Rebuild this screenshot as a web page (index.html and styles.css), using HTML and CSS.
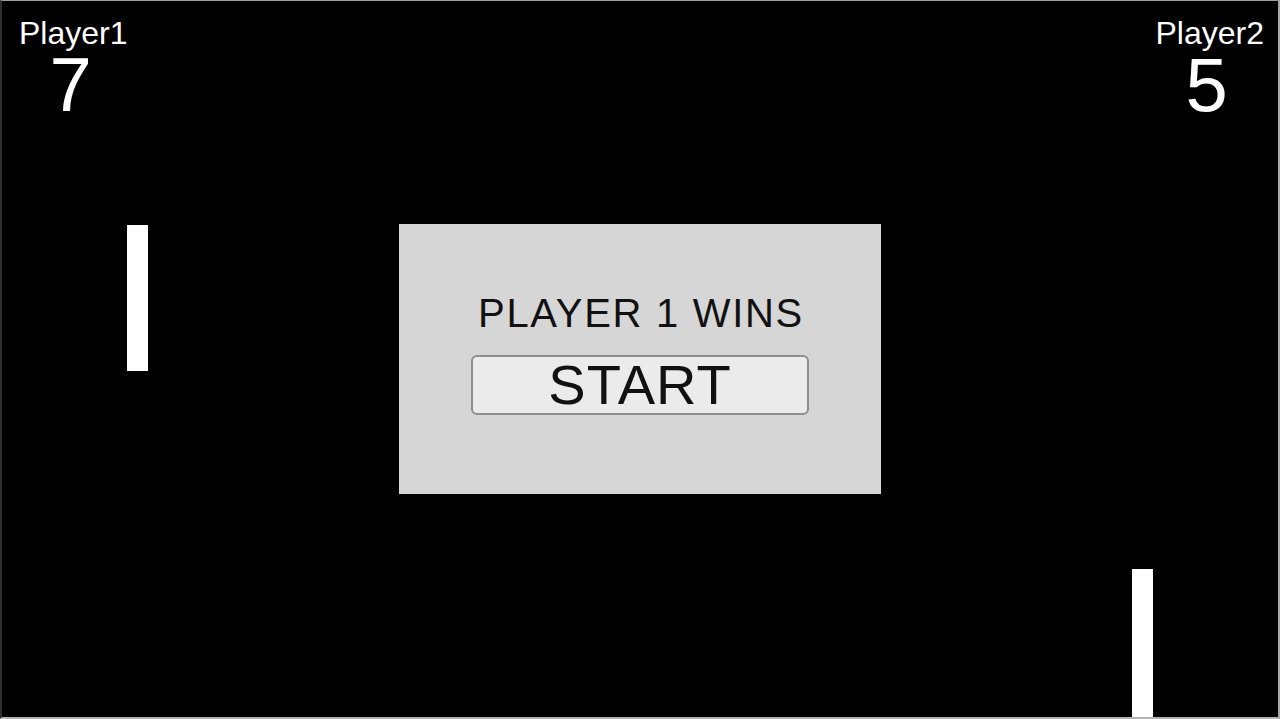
FILE: index.html
```html
<!DOCTYPE html>
<html lang="en">
<head>
<meta charset="utf-8">
<title>Pong</title>
<link rel="stylesheet" href="styles.css">
</head>
<body>
<div class="screen">
  <header class="scoreboard">
    <div class="score score-left">
      <div class="score-name">Player1</div>
      <div class="score-value">7</div>
    </div>
    <div class="score score-right">
      <div class="score-name">Player2</div>
      <div class="score-value">5</div>
    </div>
  </header>

  <div class="paddle paddle-left"></div>
  <div class="paddle paddle-right"></div>

  <div class="overlay">
    <div class="result-panel">
      <div class="result-text">PLAYER 1 WINS</div>
      <button class="start-button" type="button">START</button>
    </div>
  </div>
</div>
</body>
</html>
```

FILE: styles.css
```css
* {
  box-sizing: border-box;
}

html, body {
  margin: 0;
  padding: 0;
  background: #000;
}

body {
  font-family: "Liberation Sans", Arial, sans-serif;
}

.screen {
  position: relative;
  width: 1280px;
  height: 719px;
  background: #000;
  border-top: 1px solid #9c9c9c;
  border-left: 2px solid #2f2f2f;
  border-right: 2px solid #a8a8a8;
  border-bottom: 2px solid #b4b4b4;
  overflow: hidden;
}

/* score labels in the top corners */
.scoreboard {
  display: flex;
  justify-content: space-between;
  padding: 17px 14px 0 17px;
  color: #fff;
}

.score {
  display: flex;
  flex-direction: column;
  align-items: center;
}

.score-name {
  font-size: 32px;
  line-height: 30px;
}

.score-value {
  font-size: 76px;
  line-height: 74px;
}

.score-left .score-value {
  margin-right: 5px;
}

.score-right .score-value {
  margin-right: 6px;
}

/* paddles sit on the playfield at their game coordinates */
.paddle {
  position: absolute;
  width: 21px;
  background: #fff;
}

.paddle-left {
  left: 125px;
  top: 224px;
  height: 146px;
}

.paddle-right {
  left: 1130px;
  top: 568px;
  height: 160px;
}

/* end-of-round dialog */
.overlay {
  position: absolute;
  inset: 0;
  display: flex;
  align-items: center;
  justify-content: center;
}

.result-panel {
  width: 482px;
  height: 270px;
  background: #d6d6d6;
  display: flex;
  flex-direction: column;
  align-items: center;
  padding-top: 66px;
}

.result-text {
  font-size: 40px;
  line-height: 46px;
  color: #111;
  letter-spacing: 1.7px;
  margin-left: 2px;
}

.start-button {
  margin-top: 19px;
  width: 338px;
  height: 60px;
  background: #ebebeb;
  border: 2px solid #8e8e8e;
  border-radius: 6px;
  font-family: "Liberation Sans", Arial, sans-serif;
  font-size: 56px;
  line-height: 56px;
  color: #111;
  padding: 0;
  letter-spacing: 1px;
}
```
